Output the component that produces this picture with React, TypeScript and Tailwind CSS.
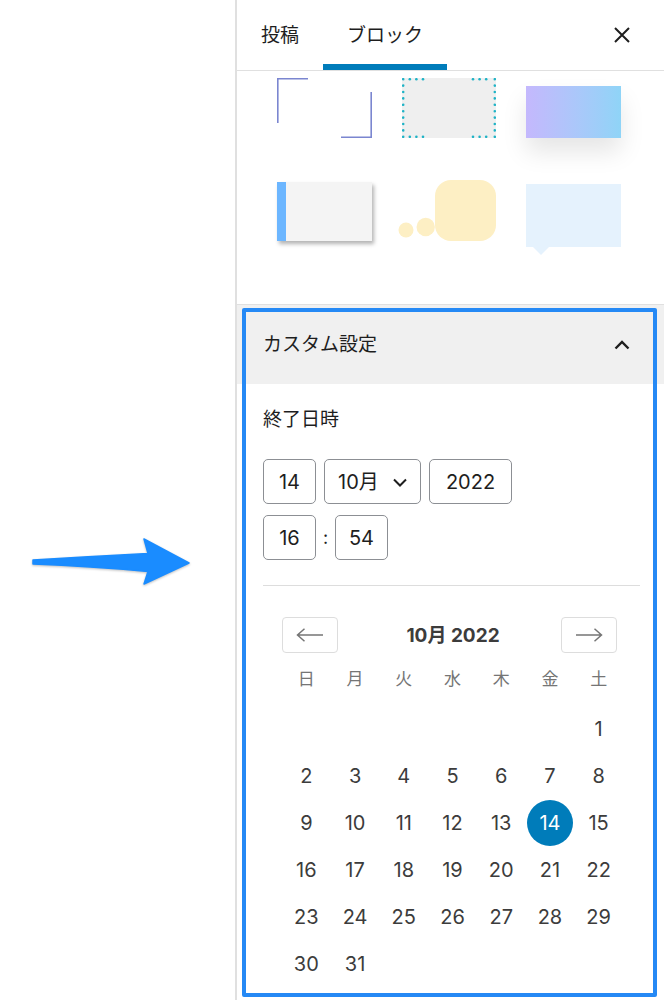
import React from "react";

const days: (number | null)[][] = [
  [null, null, null, null, null, null, 1],
  [2, 3, 4, 5, 6, 7, 8],
  [9, 10, 11, 12, 13, 14, 15],
  [16, 17, 18, 19, 20, 21, 22],
  [23, 24, 25, 26, 27, 28, 29],
  [30, 31, null, null, null, null, null],
];

const weekdays = ["日", "月", "火", "水", "木", "金", "土"];

function DottedBox() {
  const dots: React.ReactNode[] = [];
  const color = "#1fb3c6";
  for (let i = 0; i < 10; i++) {
    const y = 1.2 + i * 6.4;
    dots.push(<circle key={"l" + i} cx={1.2} cy={y} r={1.3} fill={color} />);
    dots.push(<circle key={"r" + i} cx={92.8} cy={y} r={1.3} fill={color} />);
  }
  const xs = [7.8, 14.4, 21, 71, 77.6, 84.2];
  xs.forEach((x, i) => {
    dots.push(<circle key={"t" + i} cx={x} cy={1.2} r={1.3} fill={color} />);
    dots.push(<circle key={"b" + i} cx={x} cy={58.8} r={1.3} fill={color} />);
  });
  return (
    <svg width="94" height="60" viewBox="0 0 94 60">
      <rect x="0" y="0" width="94" height="60" fill="#efefef" />
      {dots}
    </svg>
  );
}

export default function App() {
  return (
    <div className="flex w-[664px] min-h-[1000px] bg-white font-['Inter','Noto_Sans_CJK_JP',sans-serif] text-[#1e1e1e]">
      {/* left area with arrow */}
      <div className="w-[235px] shrink-0 pt-[520px]">
        <svg
          width="200"
          height="80"
          viewBox="0 520 200 80"
          className="drop-shadow-[0_1px_1px_rgba(0,0,0,0.25)]"
        >
          <path
            d="M33 560 Q 90 556.5 148 553.5 L 144 539 L 189 563 L 144 584 L 148 571.5 Q 90 566 33 564 Z"
            fill="#1a8cff"
            stroke="#1a8cff"
            strokeWidth="1.5"
            strokeLinejoin="round"
          />
        </svg>
      </div>

      {/* sidebar panel */}
      <div className="relative w-[429px] shrink-0 border-l-2 border-[#e0e0e0] flex flex-col">
        {/* tabs header */}
        <div className="h-[71px] border-b border-[#e0e0e0] flex items-stretch">
          <div className="px-6 flex items-center text-[19px] leading-none text-[#1e1e1e]">投稿</div>
          <div className="px-6 flex items-center text-[19px] leading-none text-[#1e1e1e] shadow-[inset_0_-6px_0_#007cba]">
            ブロック
          </div>
          <div className="ml-auto mr-[30px] flex items-center">
            <svg width="24" height="24" viewBox="0 0 24 24">
              <path d="M5 5 L19 19 M19 5 L5 19" stroke="#1e1e1e" strokeWidth="2" fill="none" />
            </svg>
          </div>
        </div>

        {/* block styles grid */}
        <div className="pl-[40px] pt-[7px] pb-[49px]">
          <div className="grid grid-cols-[95px_94px_95px] gap-x-[30px] gap-y-[42px]">
            {/* 1 corner brackets */}
            <div className="h-[60px]">
              <svg width="95" height="60" viewBox="0 0 95 60">
                <path d="M31 0.8 H0.8 V45" stroke="#7b86d0" strokeWidth="1.6" fill="none" />
                <path d="M94.2 14 V59.2 H64" stroke="#7b86d0" strokeWidth="1.6" fill="none" />
              </svg>
            </div>
            {/* 2 dotted */}
            <div className="h-[60px]">
              <DottedBox />
            </div>
            {/* 3 gradient */}
            <div className="h-[60px] pt-[8px]">
              <div className="h-[52px] bg-gradient-to-r from-[#c4b8fd] to-[#8fd4f7] shadow-[0_14px_24px_rgba(0,0,0,0.10)]" />
            </div>
            {/* 4 left bar */}
            <div className="h-[75px] pt-[2px]">
              <div className="h-[59px] bg-[#f4f4f4] border-l-[9px] border-[#6cb6ff] shadow-[2px_3px_4px_rgba(0,0,0,0.3)]" />
            </div>
            {/* 5 thought bubble */}
            <div className="h-[75px]">
              <svg width="94" height="75" viewBox="0 0 94 75" className="overflow-visible">
                <rect x="33" y="0" width="61" height="61" rx="16" fill="#fdefc4" />
                <circle cx="4" cy="50" r="7.5" fill="#fdefc4" />
                <circle cx="23.7" cy="47" r="9.2" fill="#fdefc4" />
              </svg>
            </div>
            {/* 6 speech */}
            <div className="h-[75px]">
              <svg width="95" height="75" viewBox="0 0 95 75">
                <rect x="0" y="4" width="95" height="63" fill="#e5f2fd" />
                <path d="M7 67 L23 67 L15 75 Z" fill="#e5f2fd" />
              </svg>
            </div>
          </div>
        </div>

        {/* custom settings header */}
        <div className="border-t border-[#e0e0e0] h-[80px] bg-[#f0f0f0] flex items-center justify-between pl-[26px] pr-[33px]">
          <span className="text-[19px] leading-none">カスタム設定</span>
          <svg width="18" height="14" viewBox="0 0 18 14">
            <path d="M2.5 10.5 L9 4 L15.5 10.5" stroke="#1e1e1e" strokeWidth="2.4" fill="none" />
          </svg>
        </div>

        {/* body */}
        <div className="pl-[26px] pr-[24px] pt-[22px] pb-[40px]">
          <div className="text-[19px] leading-[28px]">終了日時</div>

          <div className="mt-[25px] flex gap-[8px]">
            <div className="w-[53px] h-[45px] border border-[#8c8f94] rounded-[5px] flex items-center justify-center text-[20px]">
              14
            </div>
            <div className="w-[97px] h-[45px] border border-[#8c8f94] rounded-[5px] flex items-center pl-[13px] pr-[12px] justify-between text-[20px]">
              <span>10月</span>
              <svg width="16" height="12" viewBox="0 0 16 12">
                <path d="M2 3.5 L8 9.5 L14 3.5" stroke="#1e1e1e" strokeWidth="2" fill="none" />
              </svg>
            </div>
            <div className="w-[83px] h-[45px] border border-[#8c8f94] rounded-[5px] flex items-center justify-center text-[20px]">
              2022
            </div>
          </div>

          <div className="mt-[11px] flex items-center">
            <div className="w-[53px] h-[45px] border border-[#8c8f94] rounded-[5px] flex items-center justify-center text-[20px]">
              16
            </div>
            <span className="w-[19px] text-center text-[18px]">:</span>
            <div className="w-[53px] h-[45px] border border-[#8c8f94] rounded-[5px] flex items-center justify-center text-[20px]">
              54
            </div>
          </div>

          <div className="mt-[25px] h-px bg-[#dddddd]" />

          {/* calendar */}
          <div className="ml-[19px] mt-[31px] w-[341px]">
            <div className="w-[335px] flex items-center">
              <div className="w-[56px] h-[36px] border border-[#dddddd] rounded-[4px] flex items-center justify-center">
                <svg width="28" height="14" viewBox="0 0 28 14">
                  <path d="M27 7 H1.5 M8.5 0.8 L1.5 7 L8.5 13.2" stroke="#757575" strokeWidth="1.5" fill="none" />
                </svg>
              </div>
              <div className="flex-1 text-center pl-[7px] text-[19px] font-bold text-[#3c3c3c] leading-none">
                10月 2022
              </div>
              <div className="w-[56px] h-[36px] border border-[#dddddd] rounded-[4px] flex items-center justify-center">
                <svg width="28" height="14" viewBox="0 0 28 14">
                  <path d="M1 7 H26.5 M19.5 0.8 L26.5 7 L19.5 13.2" stroke="#757575" strokeWidth="1.5" fill="none" />
                </svg>
              </div>
            </div>

            <div className="mt-[16px] grid grid-cols-7 h-[20px]">
              {weekdays.map((w) => (
                <div key={w} className="flex items-center justify-center text-[17px] leading-[20px] text-[#757575]">
                  {w}
                </div>
              ))}
            </div>

            <div className="mt-[16px]">
              {days.map((row, ri) => (
                <div key={ri} className="grid grid-cols-7 h-[47px]">
                  {row.map((d, ci) => (
                    <div key={ci} className="flex items-center justify-center">
                      {d === null ? null : d === 14 ? (
                        <div className="w-[46px] h-[46px] rounded-full bg-[#007cba] text-white flex items-center justify-center text-[20px]">
                          14
                        </div>
                      ) : (
                        <span className="text-[20px] text-[#3c3c3c]">{d}</span>
                      )}
                    </div>
                  ))}
                </div>
              ))}
            </div>
          </div>
        </div>

        {/* annotation highlight */}
        <div className="pointer-events-none absolute left-[5px] top-[308px] w-[415px] h-[689px] border-4 border-[#2589f5] rounded-[2px]" />
      </div>
    </div>
  );
}
